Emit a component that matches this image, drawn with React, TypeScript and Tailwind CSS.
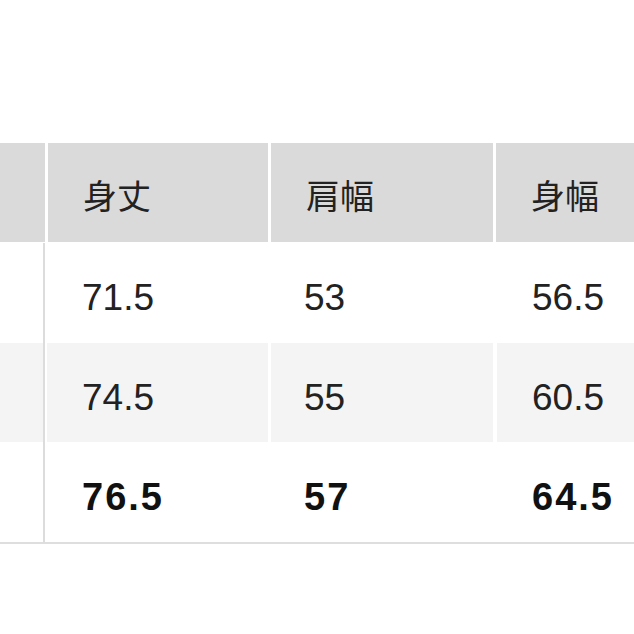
const HEAD = ["身丈", "肩幅", "身幅"];

const ROWS: { values: string[]; shade?: boolean; bold?: boolean }[] = [
  { values: ["71.5", "53", "56.5"] },
  { values: ["74.5", "55", "60.5"], shade: true },
  { values: ["76.5", "57", "64.5"], bold: true },
];

const font = {
  fontFamily: '"Liberation Sans", "Noto Sans CJK JP", sans-serif',
};

export default function App() {
  return (
    <div className="w-[634px] h-[634px] overflow-hidden bg-white" style={font}>
      <div className="pt-[143px] w-[760px]">
        <div className="flex h-[99px] gap-[3px]">
          <div className="w-[45px] bg-[#dadada]" />
          {HEAD.map((h, i) => (
            <div
              key={h}
              className={`flex items-center pl-[35px] pt-[10px] bg-[#dadada] text-[#222] text-[34px] ${
                i === 0 ? "w-[220px]" : i === 1 ? "w-[222px] pl-[33px]" : "flex-1"
              }`}
            >
              {h}
            </div>
          ))}
        </div>
        {ROWS.map((r, ri) => (
          <div
            key={ri}
            className={`flex ${ri === 1 ? "h-[99px]" : "h-[100px]"} ${ri === 0 ? "mt-px" : ""}`}
          >
            <div className={`w-[43px] ${r.shade ? "bg-[#f4f4f4]" : "bg-white"}`} />
            <div className="w-[2px] bg-[#dcdcdc]" />
            <div className="w-[2px]" />
            {r.values.map((v, i) => (
              <div
                key={i}
                className={`flex items-center pt-[10px] ${
                  r.shade ? "bg-[#f4f4f4]" : "bg-white"
                } ${
                  r.bold
                    ? "font-bold text-[#111] text-[38px] tracking-[2px]"
                    : "text-[#222] text-[37px]"
                } ${
                  i === 0
                    ? "w-[221px] pl-[35px] mr-[3px]"
                    : i === 1
                    ? "w-[222px] pl-[33px] mr-[4px]"
                    : "flex-1 pl-[35px]"
                }`}
              >
                {v}
              </div>
            ))}
          </div>
        ))}
        <div className="h-[2px] bg-[#dedede]" />
      </div>
    </div>
  );
}
